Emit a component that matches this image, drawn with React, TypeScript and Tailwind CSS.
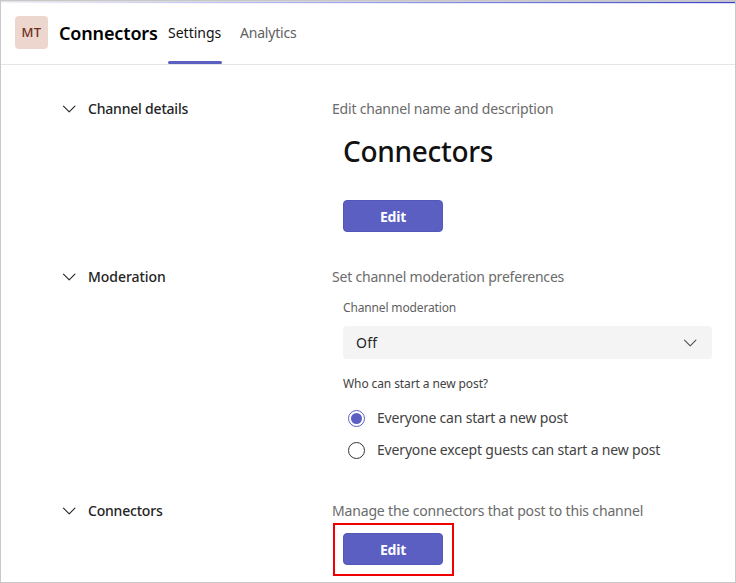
import type { ReactNode } from "react";

function Chevron({ className }: { className: string }) {
  return (
    <svg className={className} width="14" height="8" viewBox="0 0 14 8" fill="none" stroke="currentColor" strokeWidth="1.1" strokeLinecap="round" strokeLinejoin="round">
      <path d="M1.5 1.2l5.7 5.6 5.7-5.6" />
    </svg>
  );
}

function EditButton() {
  return (
    <button className="flex h-8 w-[100px] items-center justify-center rounded-[4px] border border-[#5257b8] bg-[#5b5fc2] text-[14px] font-bold tracking-[-0.2px] text-white">
      Edit
    </button>
  );
}

function Section({ title, tracking, children }: { title: string; tracking: string; children: ReactNode }) {
  return (
    <section className="flex">
      <div className="flex h-5 w-[270px] items-center">
        <Chevron className="text-[#242424]" />
        <h2 className={`ml-3 whitespace-nowrap text-[14px] font-medium leading-5 text-[#242424] ${tracking}`}>{title}</h2>
      </div>
      <div className="flex-1">{children}</div>
    </section>
  );
}

function Radio({ label, checked, tracking }: { label: string; checked?: boolean; tracking: string }) {
  return (
    <label className="flex h-8 items-center">
      <span className={`flex size-[17px] items-center justify-center rounded-full border ${checked ? "border-[#5b5fc2]" : "border-[#333]"}`}>
        {checked && <span className="size-[11px] rounded-full bg-[#5b5fc2]" />}
      </span>
      <span className={`ml-[12.5px] whitespace-nowrap text-[14px] leading-5 text-[#424242] ${tracking}`}>{label}</span>
    </label>
  );
}

export default function App() {
  return (
    <div className="h-[583px] w-[736px] overflow-hidden border border-[#c8c8c8] bg-white font-['Noto_Sans',sans-serif]">
      <div className="h-px bg-linear-to-r from-[#e4e4e4] to-[#c0c0d0]" />
      <div className="h-px bg-linear-to-r from-[#f4f4fd] via-[#9a9ee9] to-[#3c40c6]" />
      <div className="h-px bg-linear-to-r from-white to-[#dcdcf8]" />
      <header className="flex h-[61px] items-center border-b border-[#e5e5e5] pl-3.5">
        <div className="mb-[3px] flex size-[33px] items-center justify-center rounded-[4px] bg-[#edd6ce] text-[13px] font-medium tracking-[0.3px] text-[#6b2f1d]">MT</div>
        <h1 className="mb-[3px] ml-[11px] w-[109px] whitespace-nowrap text-[18px] font-semibold leading-6 tracking-[-0.15px] text-black">Connectors</h1>
        <nav className="flex h-full text-[14px] leading-5">
          <div className="flex w-[54px] flex-col justify-between pt-[19px]">
            <span className="whitespace-nowrap text-[#111]">Settings</span>
            <span className="h-[3px] rounded-sm bg-[#5b5fc2]" />
          </div>
          <span className="ml-[18px] pt-[19px] tracking-[-0.2px] text-[#616161]">Analytics</span>
        </nav>
      </header>
      <main className="flex flex-col pl-[61px] pt-[34px]">
        <Section title="Channel details" tracking="tracking-[-0.2px]">
          <p className="whitespace-nowrap text-[14px] leading-5 tracking-[-0.2px] text-[#6b6b6b]">Edit channel name and description</p>
          <div className="pl-[11px]">
            <div className="mt-[14px] text-[28px] font-medium leading-9 tracking-[-0.3px] text-[#111]">Connectors</div>
            <div className="mt-[31px]"><EditButton /></div>
          </div>
        </Section>
        <div className="mt-[35px]">
          <Section title="Moderation" tracking="tracking-[-0.05px]">
            <p className="whitespace-nowrap text-[14px] leading-5 tracking-[-0.2px] text-[#6b6b6b]">Set channel moderation preferences</p>
            <div className="pl-[11px]">
              <div className="mt-[11px] text-[12px] leading-5 tracking-[-0.15px] text-[#616161]">Channel moderation</div>
              <div className="mt-2 flex h-[33px] w-[369px] items-center justify-between rounded-[4px] bg-[#f4f4f4] pl-[13px] pr-[15px] text-[14px] tracking-[0.2px] text-[#242424]">
                Off
                <Chevron className="text-[#505050]" />
              </div>
              <div className="mt-[15px] text-[12px] leading-5 tracking-[-0.1px] text-[#424242]">Who can start a new post?</div>
              <div className="mt-2 pl-[4.5px]">
                <Radio label="Everyone can start a new post" checked tracking="tracking-[-0.2px]" />
                <Radio label="Everyone except guests can start a new post" tracking="tracking-[-0.17px]" />
              </div>
            </div>
          </Section>
        </div>
        <div className="mt-[35px]">
          <Section title="Connectors" tracking="tracking-[-0.2px]">
            <p className="whitespace-nowrap text-[14px] leading-5 tracking-[-0.16px] text-[#6b6b6b]">Manage the connectors that post to this channel</p>
            <div className="ml-px mt-[2px] h-[53px] w-[121px] border-2 border-[#f00000] pl-2 pt-2"><EditButton /></div>
          </Section>
        </div>
      </main>
    </div>
  );
}
